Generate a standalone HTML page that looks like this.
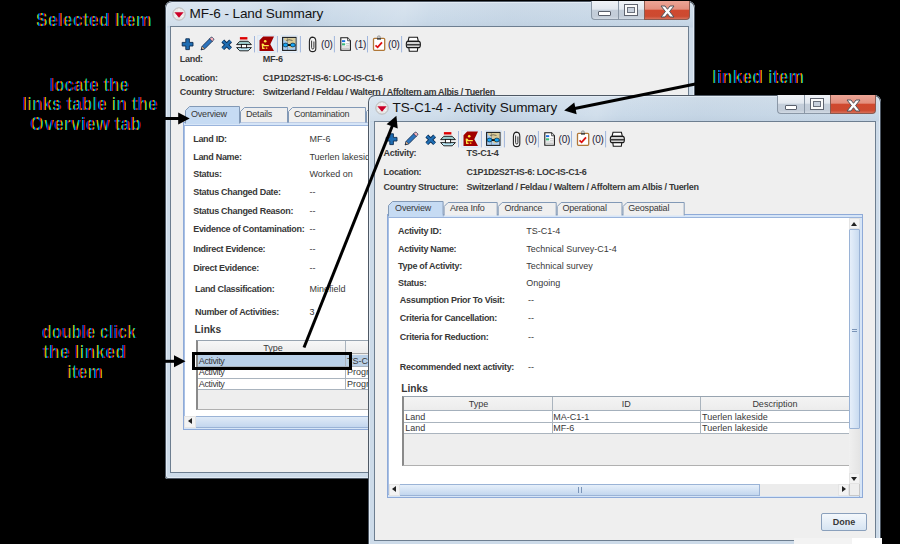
<!DOCTYPE html><html><head><meta charset="utf-8"><title>Summary</title><style>
*{margin:0;padding:0;box-sizing:border-box}
html,body{width:900px;height:544px;overflow:hidden;background:#000}
body{position:relative;font-family:"Liberation Sans",sans-serif;color:#333}
.a{position:absolute}
.t{position:absolute;white-space:nowrap;font-size:9px;line-height:12px;color:#383838}
.b{font-weight:bold;letter-spacing:-0.3px}
.ann{position:absolute;white-space:nowrap;font-size:19px;line-height:20px;text-align:center;
 color:transparent;
 background:repeating-linear-gradient(90deg,#e00 0 1px,#ee0 1px 2px,#0dd 2px 3px,#00e 3px 4px);
 -webkit-background-clip:text;background-clip:text;opacity:.6}
.frame{position:absolute;border-radius:7px 7px 3px 3px;
 background:linear-gradient(180deg,#d3e0ec 0,#c9d9e8 20px,#c4d4e4 26px,#cddbe9 27px,#cddbe9 100%);
 box-shadow:inset 0 0 0 1px #4e5864,inset 0 0 0 2px #e2ebf4}
.inner{position:absolute;background:#efefef;border:1px solid #6d7e90}
.tab{position:absolute;background:linear-gradient(#f6f6f6,#e6e6e6);border:1px solid #8da3be;border-bottom:none;border-radius:3px 3px 0 0}
.tabsel{background:linear-gradient(#d7e5f5,#c3d7ee)}
.tabt{position:absolute;white-space:nowrap;font-size:9px;line-height:12px;color:#333;text-align:center}
.panel{position:absolute;background:#fff;border:1px solid #8eaad8;box-shadow:inset 0 2px 0 #d6e5f7,inset 0 3px 0 #9ab4dc,inset -2px 0 0 #d6e5f7,inset -3px 0 0 #9ab4dc,inset 0 -2px 0 #d6e5f7,inset 0 -3px 0 #9ab4dc,inset 1px 0 0 #a8c0e4}
.grid{position:absolute;background:#b8b8b8}
.sb{position:absolute;background:linear-gradient(#f4f4f4,#e8e8e8)}
</style></head><body>
<div class="frame" style="left:165px;top:1px;width:530px;height:478px"></div>
<div class="a" style="left:167px;top:3px;width:526px;height:23px;background:linear-gradient(105deg,rgba(255,255,255,.22) 0,rgba(255,255,255,.1) 15%,rgba(150,170,190,.12) 25%,rgba(255,255,255,0) 32%,rgba(255,255,255,.15) 45%,rgba(255,255,255,0) 50%,rgba(160,180,200,.1) 65%,rgba(255,255,255,0) 100%)"></div>
<div class="inner" style="left:170px;top:26px;width:519px;height:447px"></div>
<svg class="a" style="left:171.7px;top:6.800000000000001px" width="14" height="14" viewBox="0 0 14 14"><circle cx="7" cy="7" r="6.2" fill="#e8e8e8" stroke="#b8b8b8" stroke-width="1"/><path d="M7 1.5 V4.5 M3 9.5 L5 8.5 M11 9.5 L9 8.5" stroke="#fff" stroke-width=".8"/><path d="M2.4 5.2 L11.6 5.2 L7 10.8Z" fill="#cc0028"/></svg>
<div class="t" style="left:189.5px;top:4.6px;font-size:13.6px;line-height:18px;letter-spacing:-0.12px;color:#141414">MF-6 - Land Summary</div>
<div class="a" style="left:590.5px;top:1px;width:27px;height:19px;border:1px solid #8a97a6;border-top:none;border-right:none;border-radius:0 0 0 4px;background:linear-gradient(#f0f3f7 0,#e2e8ef 45%,#c4ceda 52%,#c2ccd8 85%,#d2dae4 100%)"></div>
<div class="a" style="left:598.0px;top:11.3px;width:12.5px;height:4.8px;background:#fff;border:1px solid #5a606c;border-radius:1px"></div>
<div class="a" style="left:617.5px;top:1px;width:26px;height:19px;border:1px solid #8a97a6;border-top:none;border-right:none;background:linear-gradient(#f0f3f7 0,#e2e8ef 45%,#c4ceda 52%,#c2ccd8 85%,#d2dae4 100%)"></div>
<div class="a" style="left:623.5px;top:4.3px;width:14px;height:11.5px;background:#c8d0dc;border:1px solid #5f6470;box-shadow:inset 0 0 0 2px #fafafa, inset 0 0 0 3px #6a707c"></div>
<div class="a" style="left:643.5px;top:1px;width:46px;height:19px;border:1px solid #8a5a50;border-top:none;border-radius:0 0 4px 0;background:linear-gradient(#eca596 0,#e38f7e 45%,#d0492f 52%,#cc4a30 85%,#d8705a 100%)"></div>
<svg class="a" style="left:659.5px;top:4.8px" width="15" height="13" viewBox="-1 -1 15 13"><path d="M0 0 H4 L6.5 3.3 L9 0 H13 L8.6 5.5 L13 11 H9 L6.5 7.7 L4 11 H0 L4.4 5.5Z" fill="#fff" stroke="#50545c" stroke-width="1" stroke-linejoin="round"/></svg>
<svg class="a" style="left:176px;top:33px" width="250" height="22" viewBox="176 33 250 22"><path d="M185.8 38.8h3.6v3.6h3.6v3.6h-3.6v3.6h-3.6v-3.6h-3.6v-3.6h3.6z" fill="#1f6db2" stroke="#0b2c52" stroke-width=".9"/><path d="M201.2 49.8 L202.2 46.2 L210.4 38 L213 40.6 L204.8 48.8 Z" fill="#2c74be" stroke="#142e50" stroke-width=".9"/><path d="M209.6 38.8 L211 37.4 Q211.8 36.8 212.4 37.4 L213.6 38.6 Q214.2 39.2 213.6 40 L212.2 41.4Z" fill="#f4b0b8" stroke="#142e50" stroke-width=".7"/><path d="M201.2 49.8 L202.2 46.2 L204.8 48.8Z" fill="#e0b890" stroke="#142e50" stroke-width=".5"/><path d="M201.2 49.8 L201.6 48.3 L202.7 49.4Z" fill="#111"/><path d="M222.8 41 L230.6 48.6 M230.6 41 L222.8 48.6" stroke="#0b2c52" stroke-width="4"/><path d="M222.8 41 L230.6 48.6 M230.6 41 L222.8 48.6" stroke="#1f6db2" stroke-width="2.4"/><rect x="239.9" y="37.1" width="7.5" height="2.4" fill="#dd0000"/><path d="M236.6 44.6 L239.8 41.3 H248.2 L251.4 44.6Z" fill="#9ccccc" stroke="#111" stroke-width=".9"/><path d="M236.6 47.6 H251.4 L248.2 50.8 H239.8Z" fill="#bdeaf8" stroke="#111" stroke-width=".9"/><rect x="241.4" y="44.4" width="5.2" height="3.4" fill="#fff" stroke="#111" stroke-width=".9"/><rect x="254.0" y="36" width="1" height="16.4" fill="#9fb5dc"/><rect x="276.9" y="36" width="1" height="16.4" fill="#9fb5dc"/><rect x="299.9" y="36" width="1" height="16.4" fill="#9fb5dc"/><rect x="333.9" y="36" width="1" height="16.4" fill="#9fb5dc"/><rect x="367.0" y="36" width="1" height="16.4" fill="#9fb5dc"/><rect x="401.1" y="36" width="1" height="16.4" fill="#9fb5dc"/><rect x="257.8" y="35.4" width="17.2" height="17.2" fill="#e6eff8" stroke="#d4e2f1" stroke-width=".6"/><path d="M259.5 40.3 L263.2 36.4 L274 36.4 L270.3 44.3 L274 51 L259.5 51Z" fill="#a00000"/><circle cx="265.2" cy="41.3" r="1.3" fill="#ffe84a"/><path d="M262.3 43.6 L262.8 48.4 L264.6 48.4 M262.8 44 L264.2 45.6 L268.8 45.6" stroke="#ffe84a" stroke-width="1.4" fill="none"/><circle cx="266.6" cy="48.2" r=".9" fill="#ff9a20"/><rect x="281" y="35.4" width="16.6" height="17.2" fill="#e6eff8" stroke="#d4e2f1" stroke-width=".6"/><rect x="282.6" y="37.4" width="13.4" height="13" fill="#a8cef4" stroke="#1e1e1e" stroke-width="1.1"/><path d="M284 38 L295.5 38 L295.5 44 Q294 48 290.5 48.5 Q288 47 288.5 43 Q286.5 41 284 40Z" fill="#d9cb98"/><path d="M287.4 38 V50" stroke="#666" stroke-width=".5"/><path d="M286.2 40.5 Q289 39 292.5 40.5" stroke="#333" stroke-width=".6" fill="none"/><ellipse cx="285.5" cy="45" rx="2.5" ry="1.9" fill="#16a6f6" stroke="#0a2030" stroke-width=".7"/><ellipse cx="292.8" cy="45" rx="2.5" ry="1.9" fill="#16a6f6" stroke="#0a2030" stroke-width=".7"/><rect x="287.9" y="44.2" width="2.5" height="1.7" fill="#000"/><path d="M309.4 41.2 Q309.6 37.1 312.6 37.1 Q315.8 37.4 315.8 41.2 V48.4 Q315.8 51.6 312.6 51.6 Q309.4 51.6 309.4 48.4Z" fill="#f2f2f2" stroke="#222" stroke-width="1.1"/><path d="M311.6 40.6 V47.6 Q311.6 49 312.8 49 Q313.9 49 313.9 47.6 V41.5" stroke="#222" stroke-width=".9" fill="none"/><path d="M340.8 37.8 H347.6 L350.4 40.8 V50.2 H340.8Z" fill="#fff" stroke="#1a1a1a" stroke-width="1.1"/><path d="M347.6 37.8 V40.8 H350.4" fill="#ddd" stroke="#1a1a1a" stroke-width=".7"/><rect x="342" y="40.2" width="3.2" height="1.9" fill="#1a6fe0"/><rect x="342" y="43.3" width="3.2" height="2.1" fill="#3cb878"/><path d="M346 43.6h3.4 M346 45.3h3.4 M342 47h7.4 M342 48.5h7.4" stroke="#b0b0b0" stroke-width=".7"/><rect x="373.5" y="38.3" width="11.2" height="12" rx="1" fill="#fff" stroke="#b07838" stroke-width="1.3"/><circle cx="378.9" cy="37.2" r="1.5" fill="#c8c8c8" stroke="#777" stroke-width=".5"/><rect x="377" y="38.2" width="4" height="1.4" fill="#333"/><path d="M375.5 45.4 L377.6 47.3 L382 42.3" stroke="#dd1010" stroke-width="1.8" fill="none"/><path d="M409 37.3 H417.4 L418.4 41.4 H408Z" fill="#fff" stroke="#1a1a1a" stroke-width="1.1"/><path d="M407.6 41.4 H419 Q420.4 41.4 420.4 44.5 Q420.4 47.6 419 47.6 H407.6 Q406.3 47.6 406.3 44.5 Q406.3 41.4 407.6 41.4Z" fill="#d4d4d4" stroke="#1a1a1a" stroke-width="1.1"/><rect x="406.6" y="44" width="13.4" height="1.5" fill="#3a3a3a"/><path d="M408.8 47.6 H417.8 L417.3 51.3 H409.3Z" fill="#fff" stroke="#1a1a1a" stroke-width="1.1"/></svg>
<div class="t" style="left:321px;top:38.5px;font-size:10px;color:#1e2238;letter-spacing:-0.2px">(0)</div>
<div class="t" style="left:354.6px;top:38.5px;font-size:10px;color:#1e2238;letter-spacing:-0.2px">(1)</div>
<div class="t" style="left:388px;top:38.5px;font-size:10px;color:#1e2238;letter-spacing:-0.2px">(0)</div>
<div class="t b" style="left:179.8px;top:53.0px;">Land:</div>
<div class="t b" style="left:262.8px;top:53.0px;">MF-6</div>
<div class="t b" style="left:179.8px;top:71.6px;">Location:</div>
<div class="t b" style="left:262.8px;top:71.6px;">C1P1D2S2T-IS-6: LOC-IS-C1-6</div>
<div class="t b" style="left:179.8px;top:86.4px;">Country Structure:</div>
<div class="t b" style="left:262.8px;top:86.4px;">Switzerland / Feldau / Waltern / Affoltern am Albis / Tuerlen</div>
<div class="panel" style="left:183px;top:121.5px;width:505px;height:308px"></div>
<svg class="a" style="left:184px;top:105px" width="253" height="19" viewBox="184 105 253 19"><path d="M240.5 122.5 V111.5 L244.5 107.5 H287.5 V122.5" fill="#efefef" stroke="#8299b6" stroke-width="1"/><path d="M288.5 122.5 V111.5 L292.5 107.5 H365.5 V122.5" fill="#efefef" stroke="#8299b6" stroke-width="1"/><path d="M366.5 122.5 V111.5 L370.5 107.5 H435.5 V122.5" fill="#efefef" stroke="#8299b6" stroke-width="1"/><path d="M185.5 123.5 V110.5 L189.5 106.5 H239.5 V123.5" fill="#c6dbf3" stroke="#8299b6" stroke-width="1"/><rect x="186" y="121.5" width="53" height="3" fill="#c6dbf3"/></svg>
<div class="t" style="left:191px;top:107.5px;letter-spacing:-0.2px">Overview</div>
<div class="t" style="left:246px;top:107.5px;letter-spacing:-0.2px">Details</div>
<div class="t" style="left:293.9px;top:107.5px;letter-spacing:-0.2px">Contamination</div>
<div class="t b" style="left:193.2px;top:132.9px;">Land ID:</div>
<div class="t" style="left:309.4px;top:132.9px;">MF-6</div>
<div class="t b" style="left:193.2px;top:150.7px;">Land Name:</div>
<div class="t" style="left:309.4px;top:150.7px;">Tuerlen lakeside</div>
<div class="t b" style="left:193.2px;top:168.0px;">Status:</div>
<div class="t" style="left:309.4px;top:168.0px;">Worked on</div>
<div class="t b" style="left:193.2px;top:185.8px;">Status Changed Date:</div>
<div class="t" style="left:309.4px;top:185.8px;">--</div>
<div class="t b" style="left:193.2px;top:205.0px;">Status Changed Reason:</div>
<div class="t" style="left:309.4px;top:205.0px;">--</div>
<div class="t b" style="left:193.2px;top:222.8px;">Evidence of Contamination:</div>
<div class="t" style="left:309.4px;top:222.8px;">--</div>
<div class="t b" style="left:193.2px;top:243.0px;">Indirect Evidence:</div>
<div class="t" style="left:309.4px;top:243.0px;">--</div>
<div class="t b" style="left:193.2px;top:262.3px;">Direct Evidence:</div>
<div class="t" style="left:309.4px;top:262.3px;">--</div>
<div class="t b" style="left:195px;top:283.0px;">Land Classification:</div>
<div class="t" style="left:309.4px;top:283.0px;">Minefield</div>
<div class="t b" style="left:195px;top:305.6px;">Number of Activities:</div>
<div class="t" style="left:309.4px;top:305.6px;">3</div>
<div class="t b" style="left:194.6px;top:324.4px;font-size:10.2px;letter-spacing:0">Links</div>
<div class="a" style="left:195.5px;top:340px;width:500px;height:70px;background:#eeeeee;border-top:1px solid #98a4b0;border-left:2px solid #8a8a8a;border-bottom:1px solid #b0b0b0"></div>
<div class="a" style="left:197.5px;top:341px;width:500px;height:13px;background:linear-gradient(#f7f7f7,#ececec);border-bottom:1px solid #a8a8a8"></div>
<div class="a" style="left:197.5px;top:354.5px;width:500px;height:35px;background:#fff"></div>
<div class="a" style="left:197.5px;top:354.5px;width:500px;height:11.5px;background:#b9d0e8"></div>
<div class="a" style="left:197.5px;top:366px;width:500px;height:1px;background:#aab4be"></div>
<div class="a" style="left:197.5px;top:377.5px;width:500px;height:1px;background:#aab4be"></div>
<div class="a" style="left:197.5px;top:389px;width:500px;height:1px;background:#aab4be"></div>
<div class="a" style="left:345px;top:341px;width:1px;height:48px;background:#aab4be"></div>
<div class="t" style="left:262px;top:342.0px;width:22px;text-align:center">Type</div>
<div class="t" style="left:198.8px;top:354.8px;letter-spacing:-0.35px">Activity</div>
<div class="t" style="left:198.8px;top:366.0px;letter-spacing:-0.35px">Activity</div>
<div class="t" style="left:198.8px;top:377.5px;letter-spacing:-0.35px">Activity</div>
<div class="t" style="left:347px;top:354.8px;">TS-C1-4</div>
<div class="t" style="left:347px;top:366.0px;">Progress</div>
<div class="t" style="left:347px;top:377.5px;">Progress</div>
<div class="a" style="left:184px;top:415.8px;width:505px;height:12px;background:linear-gradient(#dfeaf7,#c3d6ee);border-top:1px solid #9ab3d6;border-bottom:1px solid #9ab3d6"></div>
<div class="a" style="left:184px;top:415.8px;width:12px;height:12px;background:#f3f3f3;border:1px solid #e4e4e4"></div>
<div class="a" style="left:187.5px;top:418.3px;width:0;height:0;border-top:3.5px solid transparent;border-bottom:3.5px solid transparent;border-right:4px solid #222"></div>
<div class="frame" style="left:368px;top:95px;width:513px;height:465px"></div>
<div class="a" style="left:370px;top:97px;width:509px;height:24px;background:linear-gradient(105deg,rgba(255,255,255,.22) 0,rgba(255,255,255,.1) 15%,rgba(150,170,190,.12) 25%,rgba(255,255,255,0) 32%,rgba(255,255,255,.15) 45%,rgba(255,255,255,0) 50%,rgba(160,180,200,.1) 65%,rgba(255,255,255,0) 100%)"></div>
<div class="inner" style="left:374px;top:121px;width:502px;height:420px"></div>
<svg class="a" style="left:374.7px;top:100.8px" width="14" height="14" viewBox="0 0 14 14"><circle cx="7" cy="7" r="6.2" fill="#e8e8e8" stroke="#b8b8b8" stroke-width="1"/><path d="M7 1.5 V4.5 M3 9.5 L5 8.5 M11 9.5 L9 8.5" stroke="#fff" stroke-width=".8"/><path d="M2.4 5.2 L11.6 5.2 L7 10.8Z" fill="#cc0028"/></svg>
<div class="t" style="left:392.5px;top:98.6px;font-size:13.6px;line-height:18px;letter-spacing:-0.12px;color:#141414">TS-C1-4 - Activity Summary</div>
<div class="a" style="left:777px;top:95px;width:27px;height:19px;border:1px solid #8a97a6;border-top:none;border-right:none;border-radius:0 0 0 4px;background:linear-gradient(#f0f3f7 0,#e2e8ef 45%,#c4ceda 52%,#c2ccd8 85%,#d2dae4 100%)"></div>
<div class="a" style="left:784.5px;top:105.3px;width:12.5px;height:4.8px;background:#fff;border:1px solid #5a606c;border-radius:1px"></div>
<div class="a" style="left:804px;top:95px;width:26px;height:19px;border:1px solid #8a97a6;border-top:none;border-right:none;background:linear-gradient(#f0f3f7 0,#e2e8ef 45%,#c4ceda 52%,#c2ccd8 85%,#d2dae4 100%)"></div>
<div class="a" style="left:810px;top:98.3px;width:14px;height:11.5px;background:#c8d0dc;border:1px solid #5f6470;box-shadow:inset 0 0 0 2px #fafafa, inset 0 0 0 3px #6a707c"></div>
<div class="a" style="left:830px;top:95px;width:46px;height:19px;border:1px solid #8a5a50;border-top:none;border-radius:0 0 4px 0;background:linear-gradient(#eca596 0,#e38f7e 45%,#d0492f 52%,#cc4a30 85%,#d8705a 100%)"></div>
<svg class="a" style="left:846px;top:98.8px" width="15" height="13" viewBox="-1 -1 15 13"><path d="M0 0 H4 L6.5 3.3 L9 0 H13 L8.6 5.5 L13 11 H9 L6.5 7.7 L4 11 H0 L4.4 5.5Z" fill="#fff" stroke="#50545c" stroke-width="1" stroke-linejoin="round"/></svg>
<svg class="a" style="left:380px;top:128px" width="250" height="22" viewBox="176 33 250 22"><path d="M185.8 38.8h3.6v3.6h3.6v3.6h-3.6v3.6h-3.6v-3.6h-3.6v-3.6h3.6z" fill="#1f6db2" stroke="#0b2c52" stroke-width=".9"/><path d="M201.2 49.8 L202.2 46.2 L210.4 38 L213 40.6 L204.8 48.8 Z" fill="#2c74be" stroke="#142e50" stroke-width=".9"/><path d="M209.6 38.8 L211 37.4 Q211.8 36.8 212.4 37.4 L213.6 38.6 Q214.2 39.2 213.6 40 L212.2 41.4Z" fill="#f4b0b8" stroke="#142e50" stroke-width=".7"/><path d="M201.2 49.8 L202.2 46.2 L204.8 48.8Z" fill="#e0b890" stroke="#142e50" stroke-width=".5"/><path d="M201.2 49.8 L201.6 48.3 L202.7 49.4Z" fill="#111"/><path d="M222.8 41 L230.6 48.6 M230.6 41 L222.8 48.6" stroke="#0b2c52" stroke-width="4"/><path d="M222.8 41 L230.6 48.6 M230.6 41 L222.8 48.6" stroke="#1f6db2" stroke-width="2.4"/><rect x="239.9" y="37.1" width="7.5" height="2.4" fill="#dd0000"/><path d="M236.6 44.6 L239.8 41.3 H248.2 L251.4 44.6Z" fill="#9ccccc" stroke="#111" stroke-width=".9"/><path d="M236.6 47.6 H251.4 L248.2 50.8 H239.8Z" fill="#bdeaf8" stroke="#111" stroke-width=".9"/><rect x="241.4" y="44.4" width="5.2" height="3.4" fill="#fff" stroke="#111" stroke-width=".9"/><rect x="254.0" y="36" width="1" height="16.4" fill="#9fb5dc"/><rect x="276.9" y="36" width="1" height="16.4" fill="#9fb5dc"/><rect x="299.9" y="36" width="1" height="16.4" fill="#9fb5dc"/><rect x="333.9" y="36" width="1" height="16.4" fill="#9fb5dc"/><rect x="367.0" y="36" width="1" height="16.4" fill="#9fb5dc"/><rect x="401.1" y="36" width="1" height="16.4" fill="#9fb5dc"/><rect x="257.8" y="35.4" width="17.2" height="17.2" fill="#e6eff8" stroke="#d4e2f1" stroke-width=".6"/><path d="M259.5 40.3 L263.2 36.4 L274 36.4 L270.3 44.3 L274 51 L259.5 51Z" fill="#a00000"/><circle cx="265.2" cy="41.3" r="1.3" fill="#ffe84a"/><path d="M262.3 43.6 L262.8 48.4 L264.6 48.4 M262.8 44 L264.2 45.6 L268.8 45.6" stroke="#ffe84a" stroke-width="1.4" fill="none"/><circle cx="266.6" cy="48.2" r=".9" fill="#ff9a20"/><rect x="281" y="35.4" width="16.6" height="17.2" fill="#e6eff8" stroke="#d4e2f1" stroke-width=".6"/><rect x="282.6" y="37.4" width="13.4" height="13" fill="#a8cef4" stroke="#1e1e1e" stroke-width="1.1"/><path d="M284 38 L295.5 38 L295.5 44 Q294 48 290.5 48.5 Q288 47 288.5 43 Q286.5 41 284 40Z" fill="#d9cb98"/><path d="M287.4 38 V50" stroke="#666" stroke-width=".5"/><path d="M286.2 40.5 Q289 39 292.5 40.5" stroke="#333" stroke-width=".6" fill="none"/><ellipse cx="285.5" cy="45" rx="2.5" ry="1.9" fill="#16a6f6" stroke="#0a2030" stroke-width=".7"/><ellipse cx="292.8" cy="45" rx="2.5" ry="1.9" fill="#16a6f6" stroke="#0a2030" stroke-width=".7"/><rect x="287.9" y="44.2" width="2.5" height="1.7" fill="#000"/><path d="M309.4 41.2 Q309.6 37.1 312.6 37.1 Q315.8 37.4 315.8 41.2 V48.4 Q315.8 51.6 312.6 51.6 Q309.4 51.6 309.4 48.4Z" fill="#f2f2f2" stroke="#222" stroke-width="1.1"/><path d="M311.6 40.6 V47.6 Q311.6 49 312.8 49 Q313.9 49 313.9 47.6 V41.5" stroke="#222" stroke-width=".9" fill="none"/><path d="M340.8 37.8 H347.6 L350.4 40.8 V50.2 H340.8Z" fill="#fff" stroke="#1a1a1a" stroke-width="1.1"/><path d="M347.6 37.8 V40.8 H350.4" fill="#ddd" stroke="#1a1a1a" stroke-width=".7"/><rect x="342" y="40.2" width="3.2" height="1.9" fill="#1a6fe0"/><rect x="342" y="43.3" width="3.2" height="2.1" fill="#3cb878"/><path d="M346 43.6h3.4 M346 45.3h3.4 M342 47h7.4 M342 48.5h7.4" stroke="#b0b0b0" stroke-width=".7"/><rect x="373.5" y="38.3" width="11.2" height="12" rx="1" fill="#fff" stroke="#b07838" stroke-width="1.3"/><circle cx="378.9" cy="37.2" r="1.5" fill="#c8c8c8" stroke="#777" stroke-width=".5"/><rect x="377" y="38.2" width="4" height="1.4" fill="#333"/><path d="M375.5 45.4 L377.6 47.3 L382 42.3" stroke="#dd1010" stroke-width="1.8" fill="none"/><path d="M409 37.3 H417.4 L418.4 41.4 H408Z" fill="#fff" stroke="#1a1a1a" stroke-width="1.1"/><path d="M407.6 41.4 H419 Q420.4 41.4 420.4 44.5 Q420.4 47.6 419 47.6 H407.6 Q406.3 47.6 406.3 44.5 Q406.3 41.4 407.6 41.4Z" fill="#d4d4d4" stroke="#1a1a1a" stroke-width="1.1"/><rect x="406.6" y="44" width="13.4" height="1.5" fill="#3a3a3a"/><path d="M408.8 47.6 H417.8 L417.3 51.3 H409.3Z" fill="#fff" stroke="#1a1a1a" stroke-width="1.1"/></svg>
<div class="t" style="left:525px;top:133.5px;font-size:10px;color:#1e2238;letter-spacing:-0.2px">(0)</div>
<div class="t" style="left:558.6px;top:133.5px;font-size:10px;color:#1e2238;letter-spacing:-0.2px">(0)</div>
<div class="t" style="left:592px;top:133.5px;font-size:10px;color:#1e2238;letter-spacing:-0.2px">(0)</div>
<div class="t b" style="left:383.5px;top:147.4px;">Activity:</div>
<div class="t b" style="left:466.6px;top:147.4px;">TS-C1-4</div>
<div class="t b" style="left:383.5px;top:166.1px;">Location:</div>
<div class="t b" style="left:466.6px;top:166.1px;">C1P1D2S2T-IS-6: LOC-IS-C1-6</div>
<div class="t b" style="left:383.5px;top:180.9px;">Country Structure:</div>
<div class="t b" style="left:466.6px;top:180.9px;">Switzerland / Feldau / Waltern / Affoltern am Albis / Tuerlen</div>
<div class="panel" style="left:387px;top:214px;width:476px;height:284px"></div>
<svg class="a" style="left:387px;top:200px" width="298.70000000000005" height="17" viewBox="387 200 298.70000000000005 17"><path d="M444.1 215.5 V206.5 L448.1 202.5 H497.2 V215.5" fill="#efefef" stroke="#8299b6" stroke-width="1"/><path d="M498.2 215.5 V206.5 L502.2 202.5 H556.2 V215.5" fill="#efefef" stroke="#8299b6" stroke-width="1"/><path d="M557.2 215.5 V206.5 L561.2 202.5 H622.0 V215.5" fill="#efefef" stroke="#8299b6" stroke-width="1"/><path d="M623.0 215.5 V206.5 L627.0 202.5 H684.2 V215.5" fill="#efefef" stroke="#8299b6" stroke-width="1"/><path d="M388.5 216.5 V205.5 L392.5 201.5 H443.1 V216.5" fill="#c6dbf3" stroke="#8299b6" stroke-width="1"/><rect x="389" y="214.5" width="53.60000000000002" height="3" fill="#c6dbf3"/></svg>
<div class="t" style="left:395.1px;top:201.5px;letter-spacing:-0.2px">Overview</div>
<div class="t" style="left:449.9px;top:201.5px;letter-spacing:-0.2px">Area Info</div>
<div class="t" style="left:504.4px;top:201.5px;letter-spacing:-0.2px">Ordnance</div>
<div class="t" style="left:562.4px;top:201.5px;letter-spacing:-0.2px">Operational</div>
<div class="t" style="left:628.2px;top:201.5px;letter-spacing:-0.2px">Geospatial</div>
<div class="t b" style="left:398px;top:224.8px;">Activity ID:</div>
<div class="t" style="left:526.2px;top:224.8px;">TS-C1-4</div>
<div class="t b" style="left:398px;top:243.0px;">Activity Name:</div>
<div class="t" style="left:526.2px;top:243.0px;">Technical Survey-C1-4</div>
<div class="t b" style="left:398px;top:259.5px;">Type of Activity:</div>
<div class="t" style="left:526.2px;top:259.5px;">Technical survey</div>
<div class="t b" style="left:398px;top:277.4px;">Status:</div>
<div class="t" style="left:526.2px;top:277.4px;">Ongoing</div>
<div class="t b" style="left:399.8px;top:294.3px;">Assumption Prior To Visit:</div>
<div class="t" style="left:528px;top:294.3px;">--</div>
<div class="t b" style="left:399.8px;top:312.1px;">Criteria for Cancellation:</div>
<div class="t" style="left:528px;top:312.1px;">--</div>
<div class="t b" style="left:399.8px;top:331.3px;">Criteria for Reduction:</div>
<div class="t" style="left:528px;top:331.3px;">--</div>
<div class="t b" style="left:399.8px;top:361.1px;">Recommended next activity:</div>
<div class="t" style="left:528px;top:361.1px;">--</div>
<div class="t b" style="left:401.3px;top:383.2px;font-size:10.2px;letter-spacing:0">Links</div>
<div class="a" style="left:402px;top:396px;width:447px;height:69.5px;background:#eeeeee;border-top:1px solid #98a4b0;border-left:2px solid #8a8a8a;border-bottom:1px solid #b0b0b0"></div>
<div class="a" style="left:404px;top:397px;width:445px;height:14px;background:linear-gradient(#f4f4f4,#ececec);border-bottom:1px solid #a4b0bc"></div>
<div class="a" style="left:404px;top:411px;width:445px;height:22.5px;background:#fff"></div>
<div class="a" style="left:404px;top:422px;width:445px;height:1px;background:#aab4be"></div>
<div class="a" style="left:404px;top:433.3px;width:445px;height:1px;background:#aab4be"></div>
<div class="a" style="left:552.3px;top:397px;width:1px;height:37px;background:#aab4be"></div>
<div class="a" style="left:700.4px;top:397px;width:1px;height:37px;background:#aab4be"></div>
<div class="t" style="left:404.5px;top:397.5px;width:148px;text-align:center">Type</div>
<div class="t" style="left:552.3px;top:397.5px;width:148px;text-align:center">ID</div>
<div class="t" style="left:700.4px;top:397.5px;width:149px;text-align:center">Description</div>
<div class="t" style="left:405.2px;top:411.0px;">Land</div>
<div class="t" style="left:553.3px;top:411.0px;">MA-C1-1</div>
<div class="t" style="left:702px;top:411.0px;">Tuerlen lakeside</div>
<div class="t" style="left:405.2px;top:421.8px;">Land</div>
<div class="t" style="left:553.3px;top:421.8px;">MF-6</div>
<div class="t" style="left:702px;top:421.8px;">Tuerlen lakeside</div>
<div class="a" style="left:849px;top:218px;width:11px;height:265.5px;background:linear-gradient(90deg,#f0f0f0,#e4e4e4)"></div>
<div class="a" style="left:849px;top:229px;width:11px;height:200px;background:linear-gradient(90deg,#e6effa,#c9dbf0);border:1px solid #9ab3d6;border-radius:1px"></div>
<div class="a" style="left:852px;top:328.5px;width:5px;height:1px;background:#7a94b8"></div>
<div class="a" style="left:852px;top:331px;width:5px;height:1px;background:#7a94b8"></div>
<div class="a" style="left:849px;top:218px;width:11px;height:11px;background:#f3f3f3;border:1px solid #e4e4e4"></div>
<div class="a" style="left:851px;top:222px;width:0;height:0;border-left:3.5px solid transparent;border-right:3.5px solid transparent;border-bottom:4px solid #222"></div>
<div class="a" style="left:849px;top:473px;width:11px;height:10.5px;background:#f3f3f3;border:1px solid #e4e4e4"></div>
<div class="a" style="left:851px;top:476.5px;width:0;height:0;border-left:3.5px solid transparent;border-right:3.5px solid transparent;border-top:4px solid #222"></div>
<div class="a" style="left:388.6px;top:483.5px;width:471.4px;height:12px;background:#ececec"></div>
<div class="a" style="left:399.4px;top:483.5px;width:360.2px;height:12px;background:linear-gradient(#e6effa,#c3d6ee);border:1px solid #9ab3d6"></div>
<div class="a" style="left:578px;top:486.5px;width:1px;height:6px;background:#7a94b8"></div>
<div class="a" style="left:580.5px;top:486.5px;width:1px;height:6px;background:#7a94b8"></div>
<div class="a" style="left:388.6px;top:483.5px;width:11px;height:12px;background:#f3f3f3;border:1px solid #e4e4e4"></div>
<div class="a" style="left:391.5px;top:486px;width:0;height:0;border-top:3.5px solid transparent;border-bottom:3.5px solid transparent;border-right:4px solid #222"></div>
<div class="a" style="left:838px;top:483.5px;width:11px;height:12px;background:#f3f3f3;border:1px solid #e4e4e4"></div>
<div class="a" style="left:849px;top:483.5px;width:11px;height:12px;background:#eeeeee;border:1px solid #c8c8c8;border-top:none"></div>
<div class="a" style="left:842px;top:486px;width:0;height:0;border-top:3.5px solid transparent;border-bottom:3.5px solid transparent;border-left:4px solid #222"></div>
<div class="a" style="left:821.3px;top:513.3px;width:45.4px;height:18.2px;background:linear-gradient(#f4f8fc,#d6e4f2);border:1px solid #8aa0bc;border-radius:2px"></div>
<div class="t b" style="left:821.3px;top:516.4px;width:45.4px;text-align:center;letter-spacing:0">Done</div>
<div class="a" style="left:794px;top:537.7px;width:88px;height:7px;background:linear-gradient(90deg,#f3f3f3 0,#f3f3f3 66%,#fff 66%)"></div>
<div class="a" style="left:191.8px;top:352px;width:160px;height:18px;border:3px solid #000"></div>
<svg class="a" style="left:0;top:0" width="900" height="544"><line x1="160" y1="118.5" x2="180.20" y2="118.50" stroke="#000" stroke-width="3"/><path d="M189.7 118.5 L178.20 124.50 L178.20 112.50Z" fill="#000"/><line x1="160" y1="361.3" x2="176.00" y2="361.30" stroke="#000" stroke-width="3"/><path d="M185.5 361.3 L174.00 367.30 L174.00 355.30Z" fill="#000"/><line x1="304" y1="347.5" x2="392.88" y2="124.52" stroke="#000" stroke-width="3"/><path d="M396.4 115.7 L397.72 128.60 L386.57 124.16Z" fill="#000"/><line x1="720" y1="79" x2="573.51" y2="108.71" stroke="#000" stroke-width="3"/><path d="M564.2 110.6 L574.28 102.43 L576.66 114.19Z" fill="#000"/></svg>
<svg class="a" style="left:0;top:0" width="900" height="544"><defs><pattern id="st" patternUnits="userSpaceOnUse" width="4" height="3"><rect x="0" y="0" width="1" height="3" fill="#ff2020"/><rect x="1" y="0" width="1" height="3" fill="#f0e000"/><rect x="2" y="0" width="1" height="3" fill="#00e0e0"/><rect x="3" y="0" width="1" height="3" fill="#1030ff"/></pattern></defs><text x="35.8" y="25.8" textLength="116" lengthAdjust="spacingAndGlyphs" font-family="Liberation Sans" font-weight="bold" font-size="18" fill="url(#st)" opacity="0.78">Selected Item</text><text x="49.5" y="90.7" textLength="79.4" lengthAdjust="spacingAndGlyphs" font-family="Liberation Sans" font-weight="bold" font-size="18" fill="url(#st)" opacity="0.78">locate the</text><text x="22.3" y="110.1" textLength="135.3" lengthAdjust="spacingAndGlyphs" font-family="Liberation Sans" font-weight="bold" font-size="18" fill="url(#st)" opacity="0.78">links table in the</text><text x="30.1" y="130.3" textLength="111.2" lengthAdjust="spacingAndGlyphs" font-family="Liberation Sans" font-weight="bold" font-size="18" fill="url(#st)" opacity="0.78">Overview tab</text><text x="41.7" y="337.8" textLength="94.4" lengthAdjust="spacingAndGlyphs" font-family="Liberation Sans" font-weight="bold" font-size="18" fill="url(#st)" opacity="0.78">double click</text><text x="42.8" y="357.8" textLength="83.3" lengthAdjust="spacingAndGlyphs" font-family="Liberation Sans" font-weight="bold" font-size="18" fill="url(#st)" opacity="0.78">the linked</text><text x="67" y="378" textLength="36" lengthAdjust="spacingAndGlyphs" font-family="Liberation Sans" font-weight="bold" font-size="18" fill="url(#st)" opacity="0.78">item</text><text x="712" y="82.5" textLength="92.3" lengthAdjust="spacingAndGlyphs" font-family="Liberation Sans" font-weight="bold" font-size="18" fill="url(#st)" opacity="0.78">linked item</text></svg>
</body></html>
